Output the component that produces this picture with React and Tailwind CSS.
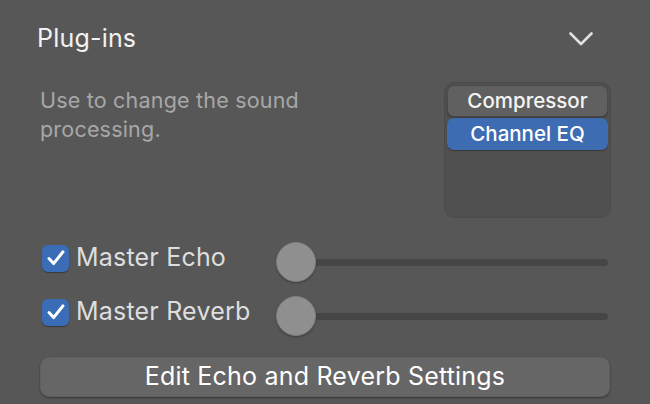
import { useState } from "react";

function Chevron() {
  return (
    <svg width="24" height="14" viewBox="0 0 24 14" fill="none">
      <path d="M1.5 1.5 L12 12 L22.5 1.5" stroke="#e0e0e0" strokeWidth="2.6" strokeLinecap="round" strokeLinejoin="round" />
    </svg>
  );
}

function Check({ checked, onChange }) {
  return (
    <button
      onClick={onChange}
      className="w-[27px] h-[27px] rounded-[6px] bg-[#3b6cb6] flex items-center justify-center shadow-[0_1px_1px_rgba(0,0,0,0.35)] shrink-0"
    >
      {checked && (
        <svg width="20" height="18" viewBox="0 0 20 18" fill="none">
          <path d="M3 9.6 L7.6 14.6 L17 2.8" stroke="white" strokeWidth="3" strokeLinecap="round" strokeLinejoin="round" />
        </svg>
      )}
    </button>
  );
}

function Slider() {
  return (
    <div className="relative flex-1 h-[40px] flex items-center mt-[8px]">
      <div className="w-full h-[7px] rounded-full bg-[#464646]" />
      <div className="absolute left-0 top-0 w-[40px] h-[40px] rounded-full bg-[#8f8f8f] border border-[#7f7f7f] shadow-[0_1px_2px_rgba(0,0,0,0.3)]" />
    </div>
  );
}

export default function App() {
  const [echo, setEcho] = useState(true);
  const [reverb, setReverb] = useState(true);
  const [selected, setSelected] = useState("Channel EQ");
  const plugins = ["Compressor", "Channel EQ"];

  return (
    <div className="w-[650px] h-[404px] bg-[#575757] overflow-hidden font-['Inter',sans-serif] antialiased">
      {/* Header */}
      <div className="flex items-center justify-between pl-[37px] pr-[57px] pt-[20px] h-[58px]">
        <span className="text-[25px] text-[#f2f2f2] tracking-[0.2px]">Plug-ins</span>
        <Chevron />
      </div>

      {/* Description + plugin list */}
      <div className="flex justify-between pl-[40px] pr-[39px] mt-[24px]">
        <p className="text-[21.5px] leading-[29px] text-[#a7a7a7] w-[300px] mt-[4px] tracking-[0.2px]">
          Use to change the sound processing.
        </p>
        <div className="w-[167px] h-[136px] rounded-[10px] bg-[#505050] border border-[#4b4b4b] p-[2px] flex flex-col gap-[1px]">
          {plugins.map((p) => (
            <button
              key={p}
              onClick={() => setSelected(p)}
              className={
                selected === p
                  ? "h-[32px] rounded-[7px] bg-[#3d6cb3] text-white text-[20.5px] font-medium leading-none shadow-[0_1px_1px_rgba(0,0,0,0.3)]"
                  : "h-[32px] rounded-[7px] bg-[#606060] border border-[#4a4a4a] text-[#f4f4f4] text-[20.5px] font-medium leading-none shadow-[0_1px_1px_rgba(0,0,0,0.3)]"
              }
            >
              {p}
            </button>
          ))}
        </div>
      </div>

      {/* Master toggles */}
      <div className="flex flex-col gap-[14px] pl-[42px] pr-[42px] mt-[20px]">
        <div className="flex items-center h-[40px]">
          <Check checked={echo} onChange={() => setEcho(!echo)} />
          <span className="ml-[7px] w-[200px] text-[25px] text-[#dedede] tracking-[0.2px]">Master Echo</span>
          <Slider />
        </div>
        <div className="flex items-center h-[40px]">
          <Check checked={reverb} onChange={() => setReverb(!reverb)} />
          <span className="ml-[7px] w-[200px] text-[25px] text-[#dedede] tracking-[0.2px]">Master Reverb</span>
          <Slider />
        </div>
      </div>

      {/* Edit button */}
      <div className="pl-[40px] pr-[40px] mt-[25px]">
        <button className="w-full h-[40px] rounded-[9px] bg-[#666666] border border-[#5f5f5f] shadow-[0_1px_2px_rgba(0,0,0,0.4)] text-white text-[25px] tracking-[0.2px]">
          Edit Echo and Reverb Settings
        </button>
      </div>
    </div>
  );
}
